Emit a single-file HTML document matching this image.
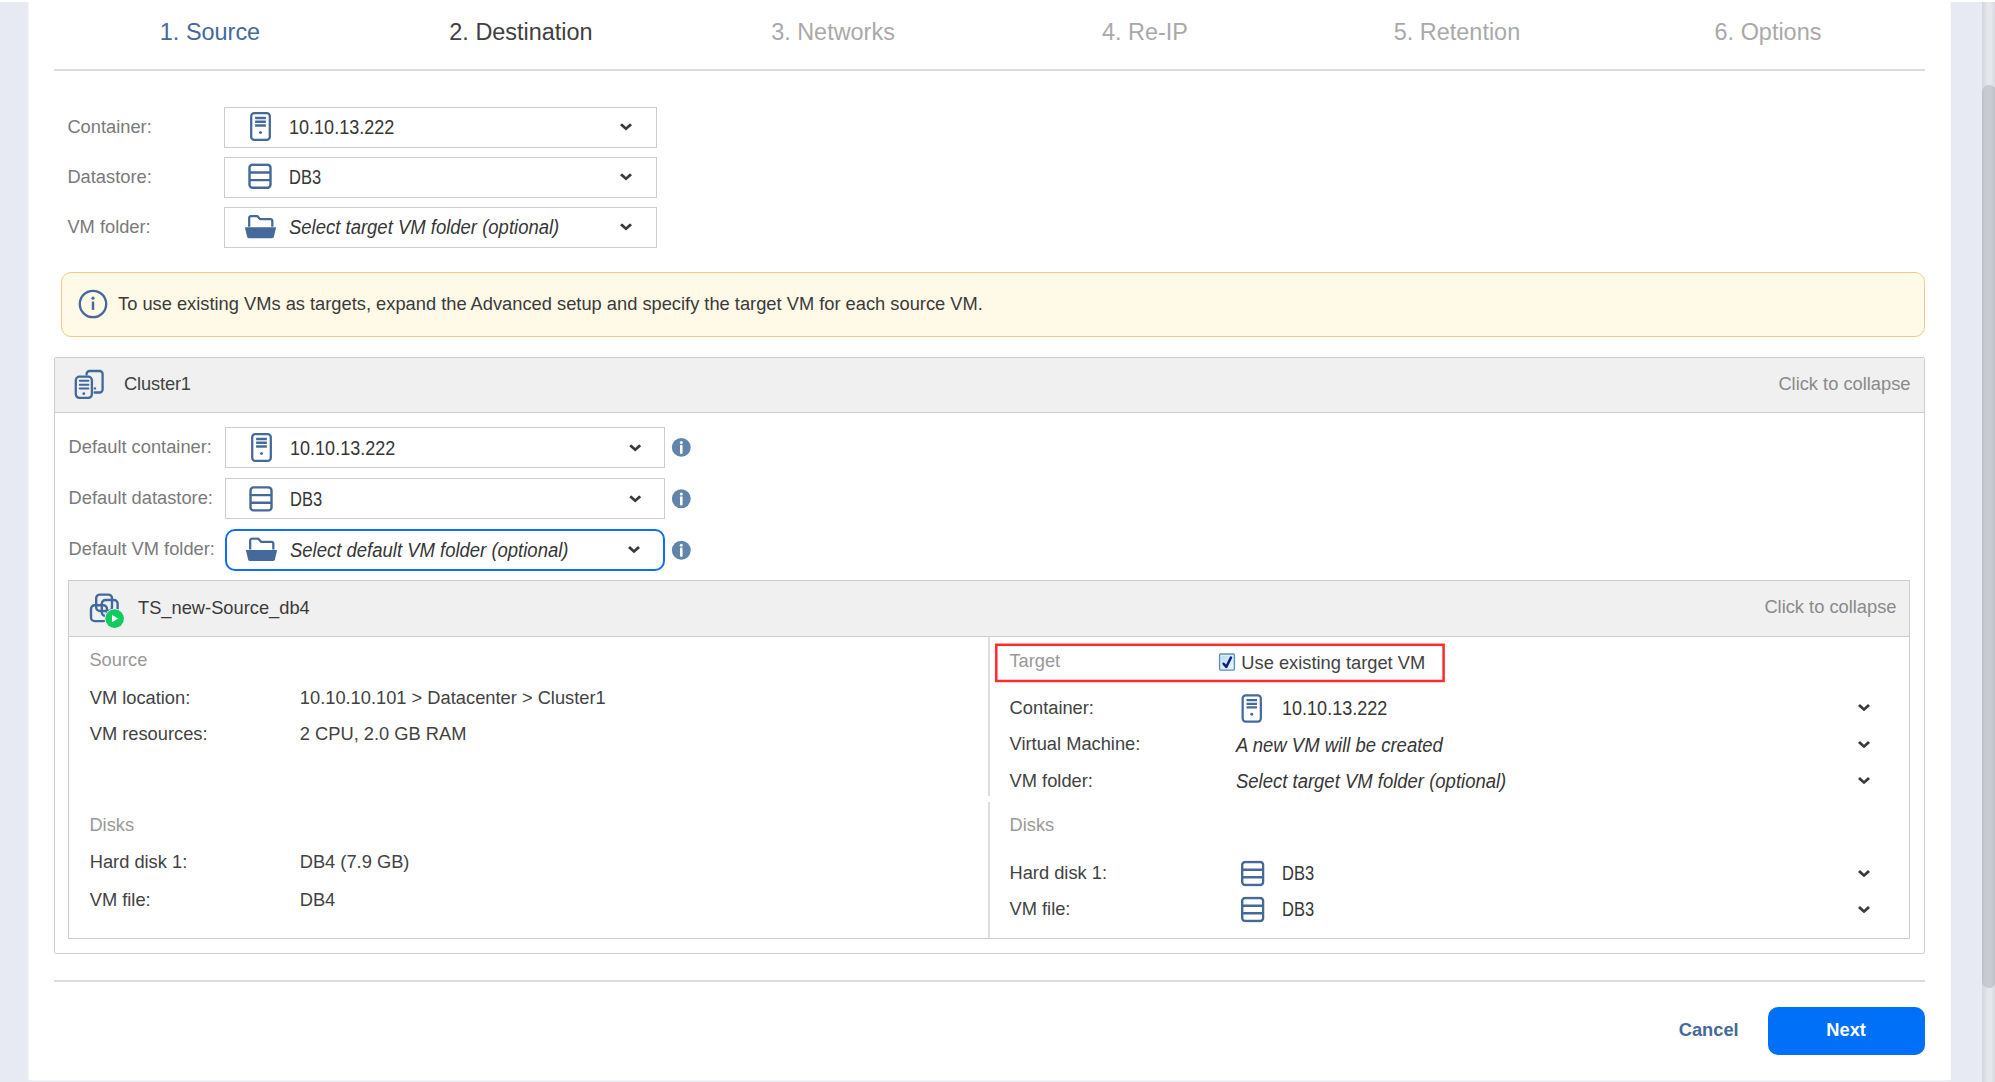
<!DOCTYPE html>
<html lang="en">
<head>
<meta charset="utf-8">
<title>Destination</title>
<style>
*{box-sizing:border-box;margin:0;padding:0}
html,body{width:1995px;height:1082px;overflow:hidden}
body{background:#e7eaf3;font-family:"Liberation Sans",sans-serif;font-size:18.3px;color:#333;position:relative}
.abs{position:absolute}
#topstrip{left:0;top:0;width:1995px;height:2px;background:#fff}
#panel{left:29px;top:0;width:1921px;height:1080px;background:#fff;box-shadow:-1px 0 0 #f3f5f9,1px 0 0 #f8f9fb,0 1px 0 #f0f2f8}
#track{left:1982px;top:2px;width:13px;height:1080px;background:linear-gradient(90deg,#d4d7e0 0,#dcdee6 3px,#e6e7eb 5.5px,#e6e7eb 9px,#d6d9e2 100%)}
#thumb{left:1982px;top:85px;width:13.5px;height:903px;border-radius:6.7px;background:linear-gradient(90deg,#babdc3 0,#c7cad0 3px,#c8cbd1 9px,#bcbfc5 100%)}
.t{position:absolute;white-space:nowrap;line-height:1;transform:scaleY(1.045);transform-origin:0 0}
.tab{font-size:23.45px;transform:translateX(-50%);top:21.3px}
.hr{position:absolute;left:54px;width:1871px;height:2px;background:#dcdcdc}
.lbl{color:#7a7a7a}
.sel{position:absolute;border:1px solid #cdcdcd;background:#fff;height:41px}
.sg{font-size:19.5px;color:#363636;transform-origin:0 50%;display:inline-block}
.sg.n{transform:scaleX(.925)}
.sg.d{transform:scaleX(.845)}
.sg.i{font-style:italic;transform:scaleX(.948)}
.ico{position:absolute;overflow:visible}
.chev{position:absolute}
.sel.foc{border:2px solid #0d6efd;border-radius:10px}
.sec{color:#999}
.k{color:#424242}
</style>
</head>
<body>
<div class="abs" id="panel"></div>
<div class="abs" id="track"></div>
<div class="abs" id="thumb"></div>
<div class="abs" id="topstrip"></div>

<!-- tabs -->
<div class="t tab" style="left:210px;color:#44699a">1. Source</div>
<div class="t tab" style="left:521px;color:#404040">2. Destination</div>
<div class="t tab" style="left:833px;color:#a9a9a9">3. Networks</div>
<div class="t tab" style="left:1145px;color:#a9a9a9">4. Re-IP</div>
<div class="t tab" style="left:1457px;color:#a9a9a9">5. Retention</div>
<div class="t tab" style="left:1768px;color:#a9a9a9">6. Options</div>
<div class="hr" style="top:69px"></div>

<svg width="0" height="0" style="position:absolute">
<defs>
<symbol id="i-server" viewBox="0 0 22 30">
  <rect x="2" y="2" width="18" height="26" rx="3" ry="3" fill="none" stroke="#44699a" stroke-width="2.2"/>
  <path d="M5.8 6.8h10.4M5.8 10.4h10.4M5.8 14h10.4" stroke="#44699a" stroke-width="2.3" fill="none"/>
  <circle cx="11" cy="20.8" r="1.45" fill="#44699a"/>
</symbol>
<symbol id="i-ds" viewBox="0 0 24 26">
  <rect x="1.5" y="1.5" width="21" height="23" rx="3" ry="3" fill="none" stroke="#44699a" stroke-width="2.4"/>
  <path d="M1.5 9.2h21M1.5 16.8h21" stroke="#44699a" stroke-width="2.4" fill="none"/>
</symbol>
<symbol id="i-folder" viewBox="0 0 32 24">
  <path d="M5 12V3.2a1.7 1.7 0 0 1 1.7-1.7h6.2l2.6 3h10.3a1.7 1.7 0 0 1 1.7 1.7V12" fill="none" stroke="#44699a" stroke-width="2.2" stroke-linejoin="round"/>
  <path d="M0.8 12.5h30.4l-2.2 9.2a2 2 0 0 1-1.9 1.5H4.9a2 2 0 0 1-1.9-1.5z" fill="#44699a"/>
</symbol>
<symbol id="i-chev" viewBox="0 0 12 8">
  <path d="M0 1.9L2 0 6 3.7 10 0 12 1.9 6 7.3z" fill="#3a3a3a"/>
</symbol>
<symbol id="i-info" viewBox="0 0 20 20">
  <circle cx="10" cy="10" r="9.45" fill="#6184ad"/>
  <rect x="8.7" y="7.4" width="2.6" height="9.3" rx="1.3" fill="#fff"/>
  <circle cx="10" cy="5.1" r="1.5" fill="#fff"/>
</symbol>
</defs>
</svg>
<div class="t lbl" style="left:67.4px;top:117px">Container:</div>
<div class="t lbl" style="left:67.4px;top:167px">Datastore:</div>
<div class="t lbl" style="left:67.4px;top:217px">VM folder:</div>
<div class="sel" style="left:224px;top:107px;width:433px;height:41px"></div>
<svg class="ico" style="left:249px;top:111px" width="23" height="31"><use href="#i-server"/></svg>
<div class="t sg n" style="left:289px;top:118px;transform:translate(0px,0.0px) scaleX(0.925)">10.10.13.222</div>
<svg class="ico" style="left:620px;top:123px;transform:translate(0.0px,0.3px)" width="12" height="8"><use href="#i-chev"/></svg>
<div class="sel" style="left:224px;top:157px;width:433px;height:41px"></div>
<svg class="ico" style="left:248px;top:163px;transform:translate(0px,0.3px)" width="24" height="26"><use href="#i-ds"/></svg>
<div class="t sg d" style="left:289px;top:168px;transform:translate(0px,0.0px) scaleX(0.845)">DB3</div>
<svg class="ico" style="left:620px;top:173px;transform:translate(0.0px,0.3px)" width="12" height="8"><use href="#i-chev"/></svg>
<div class="sel" style="left:224px;top:207px;width:433px;height:41px"></div>
<svg class="ico" style="left:244px;top:214px;transform:translate(0px,0.5px)" width="33" height="24.7"><use href="#i-folder"/></svg>
<div class="t sg i" style="left:289px;top:218px;transform:translate(0px,0.0px) scaleX(0.948)">Select target VM folder (optional)</div>
<svg class="ico" style="left:620px;top:223px;transform:translate(0.0px,0.3px)" width="12" height="8"><use href="#i-chev"/></svg>
<div class="abs" id="banner" style="left:61px;top:272px;width:1864px;height:65px;background:#fff9e7;border:1px solid #f3cb80;border-radius:10px"></div>
<svg class="ico" style="left:78px;top:289px" width="30" height="30" viewBox="0 0 30 30"><circle cx="15" cy="15" r="13.2" fill="none" stroke="#44699a" stroke-width="2.3"/><rect x="13.8" y="12.5" width="2.4" height="8.4" fill="#44699a"/><circle cx="15" cy="9.2" r="1.6" fill="#44699a"/></svg>
<div class="t" style="left:118px;top:294px;color:#3a3a3a">To use existing VMs as targets, expand the Advanced setup and specify the target VM for each source VM.</div>
<div class="abs" id="cluster" style="left:54px;top:357px;width:1871px;height:597px;border:1px solid #cecece;border-radius:2px;background:#fff"></div>
<div class="abs" id="clusterhead" style="left:55px;top:358px;width:1869px;height:55px;background:#f0f0f0;border-bottom:1px solid #ccc"></div>
<svg class="ico" style="left:70px;top:366px" width="40" height="38" viewBox="70 366 40 38"><path d="M86.6 374.6v-0.6a3 3 0 0 1 3-3h10a3 3 0 0 1 3 3v15.5a3 3 0 0 1-3 3h-5" fill="none" stroke="#41699b" stroke-width="2.3" stroke-linecap="round"/><rect x="75.8" y="376.7" width="16.1" height="21.2" rx="3.6" fill="none" stroke="#41699b" stroke-width="2.3"/><path d="M79.8 380.8h8.6M79.8 384.7h8.6M79.8 388.6h8.6" stroke="#41699b" stroke-width="2" stroke-linecap="round" fill="none"/><circle cx="83.8" cy="393.7" r="1.4" fill="#41699b"/><circle cx="94.9" cy="388.4" r="1.2" fill="#41699b"/></svg>
<div class="t" style="left:124px;top:373.8px;color:#424242;letter-spacing:-0.15px">Cluster1</div>
<div class="t" style="right:84.5px;top:374px;color:#8a8a8a">Click to collapse</div>
<div class="t lbl" style="left:68.6px;top:437px">Default container:</div>
<div class="t lbl" style="left:68.6px;top:488px">Default datastore:</div>
<div class="t lbl" style="left:68.6px;top:539px">Default VM folder:</div>
<div class="sel" style="left:225px;top:427px;width:440px;height:41px"></div>
<svg class="ico" style="left:250px;top:432px" width="23" height="31"><use href="#i-server"/></svg>
<div class="t sg n" style="left:290px;top:439px;transform:translate(0px,0px) scaleX(0.925)">10.10.13.222</div>
<svg class="ico" style="left:629px;top:444px;transform:translate(0.2px,0.3px)" width="12" height="8"><use href="#i-chev"/></svg>
<div class="sel" style="left:225px;top:478px;width:440px;height:41px"></div>
<svg class="ico" style="left:249px;top:485px;transform:translate(0px,0.9px)" width="24" height="26"><use href="#i-ds"/></svg>
<div class="t sg d" style="left:290px;top:490px;transform:translate(0px,0px) scaleX(0.845)">DB3</div>
<svg class="ico" style="left:629px;top:495px;transform:translate(0.2px,0.3px)" width="12" height="8"><use href="#i-chev"/></svg>
<div class="sel foc" style="left:225px;top:529px;width:440px;height:42px"></div>
<svg class="ico" style="left:245px;top:537px;transform:translate(0px,0.2px)" width="33" height="24.7"><use href="#i-folder"/></svg>
<div class="t sg i" style="left:290px;top:540px;transform:translate(0px,0.7px) scaleX(0.948)">Select default VM folder (optional)</div>
<svg class="ico" style="left:628px;top:546px" width="12" height="8"><use href="#i-chev"/></svg>
<svg class="ico" style="left:671px;top:437px;transform:translate(0.3px,0.4px)" width="20" height="20"><use href="#i-info"/></svg>
<svg class="ico" style="left:671px;top:488px;transform:translate(0.3px,0.8px)" width="20" height="20"><use href="#i-info"/></svg>
<svg class="ico" style="left:671px;top:540px;transform:translate(0.3px,0.2px)" width="20" height="20"><use href="#i-info"/></svg>
<div class="abs" id="inner" style="left:68px;top:580px;width:1842px;height:359px;border:1px solid #ccc;background:#fff"></div>
<div class="abs" id="innerhead" style="left:69px;top:581px;width:1840px;height:56px;background:#f0f0f0;border-bottom:1px solid #ccc"></div>
<svg class="ico" style="left:85px;top:590px" width="42" height="42" viewBox="85 590 42 42"><rect x="96.2" y="594.6" width="15.8" height="16.4" rx="3.7" fill="none" stroke="#41699b" stroke-width="2.4"/><rect x="101.8" y="600" width="15.8" height="16" rx="3.7" fill="none" stroke="#41699b" stroke-width="2.4"/><rect x="91" y="605.3" width="16" height="15.8" rx="3.7" fill="none" stroke="#41699b" stroke-width="2.4"/><circle cx="114.6" cy="618.6" r="10.2" fill="#f3eff3"/><circle cx="114.6" cy="618.6" r="9.3" fill="#10cb5f"/><path d="M112 615v7.2l6.3-3.6z" fill="#fff"/></svg>
<div class="t" style="left:138px;top:598px;color:#3a3a3a">TS_new-Source_db4</div>
<div class="t" style="right:98.5px;top:597.3px;color:#8a8a8a">Click to collapse</div>
<div class="abs" style="left:988px;top:637px;width:2px;height:159px;background:#ddd"></div>
<div class="abs" style="left:988px;top:802px;width:2px;height:136px;background:#ddd"></div>
<div class="t sec" style="left:89.4px;top:649.8px;">Source</div>
<div class="t k" style="left:89.7px;top:688.2px;">VM location:</div>
<div class="t k" style="left:299.8px;top:688.2px;">10.10.10.101 &gt; Datacenter &gt; Cluster1</div>
<div class="t k" style="left:89.7px;top:724.3px;">VM resources:</div>
<div class="t k" style="left:299.8px;top:724.3px;">2 CPU, 2.0 GB RAM</div>
<div class="t sec" style="left:89.4px;top:814.8px;">Disks</div>
<div class="t k" style="left:89.7px;top:852.4px;">Hard disk 1:</div>
<div class="t k" style="left:299.7px;top:852.4px;">DB4 (7.9 GB)</div>
<div class="t k" style="left:89.7px;top:889.6px;">VM file:</div>
<div class="t k" style="left:299.7px;top:889.6px;">DB4</div>
<div class="t sec" style="left:1009.4px;top:650.8px;">Target</div>
<svg class="ico" style="left:990px;top:640px" width="460" height="46" viewBox="990 640 460 46"><rect x="996.3" y="644.8" width="447.3" height="36.2" fill="none" stroke="#ff2a2c" stroke-width="2.5"/></svg>
<svg class="ico" style="left:1216px;top:650px" width="24" height="24" viewBox="1216 650 24 24"><defs><linearGradient id="cbg" x1="0" y1="0" x2="1" y2="1"><stop offset="0" stop-color="#b5defa"/><stop offset="1" stop-color="#e6f7fd"/></linearGradient></defs><rect x="1219.6" y="654" width="14.8" height="16.1" rx="1" fill="#e3f3fc" stroke="#5f8db4" stroke-width="1.4"/><rect x="1221.4" y="655.8" width="11.2" height="12.5" fill="url(#cbg)"/><path d="M1223.6 663.8l2.7 3.1L1231 657.5" fill="none" stroke="#141c80" stroke-width="2.5" stroke-linecap="round" stroke-linejoin="round"/></svg>
<div class="t k" style="left:1241.3px;top:652.5px;">Use existing target VM</div>
<div class="t k" style="left:1009.6px;top:697.6px;">Container:</div>
<div class="t k" style="left:1009.6px;top:733.6px;">Virtual Machine:</div>
<div class="t k" style="left:1009.6px;top:770.8px;">VM folder:</div>
<div class="t sec" style="left:1009.5px;top:814.7px;">Disks</div>
<div class="t k" style="left:1009.5px;top:862.7px;">Hard disk 1:</div>
<div class="t k" style="left:1009.5px;top:899px;">VM file:</div>
<svg class="ico" style="left:1240px;top:693px;transform:translate(0.5px,0.3px)" width="22.5" height="30.3"><use href="#i-server"/></svg>
<div class="t sg n" style="left:1282px;top:699px;">10.10.13.222</div>
<div class="t sg i" style="left:1236px;top:736px;">A new VM will be created</div>
<div class="t sg i" style="left:1236px;top:772px;">Select target VM folder (optional)</div>
<svg class="ico" style="left:1240px;top:860px;transform:translate(0.7px,0.5px)" width="24" height="26"><use href="#i-ds"/></svg>
<svg class="ico" style="left:1240px;top:896px;transform:translate(0.7px,0.5px)" width="24" height="26"><use href="#i-ds"/></svg>
<div class="t sg d" style="left:1282px;top:864.3px;">DB3</div>
<div class="t sg d" style="left:1282px;top:900.3px;">DB3</div>
<svg class="ico" style="left:1858px;top:704px" width="12" height="8"><use href="#i-chev"/></svg>
<svg class="ico" style="left:1858px;top:741px" width="12" height="8"><use href="#i-chev"/></svg>
<svg class="ico" style="left:1858px;top:777px" width="12" height="8"><use href="#i-chev"/></svg>
<svg class="ico" style="left:1858px;top:870px" width="12" height="8"><use href="#i-chev"/></svg>
<svg class="ico" style="left:1858px;top:906px" width="12" height="8"><use href="#i-chev"/></svg>
<div class="hr" style="top:980px"></div>
<div class="t" style="left:1678.7px;top:1019.8px;color:#44699a;font-weight:bold">Cancel</div>
<div class="abs" id="next" style="left:1768px;top:1007px;width:157px;height:48px;border-radius:10px;background:#0070f9"></div>
<div class="t" style="left:1826.3px;top:1019.8px;color:#fff;font-weight:bold">Next</div>

</body>
</html>
